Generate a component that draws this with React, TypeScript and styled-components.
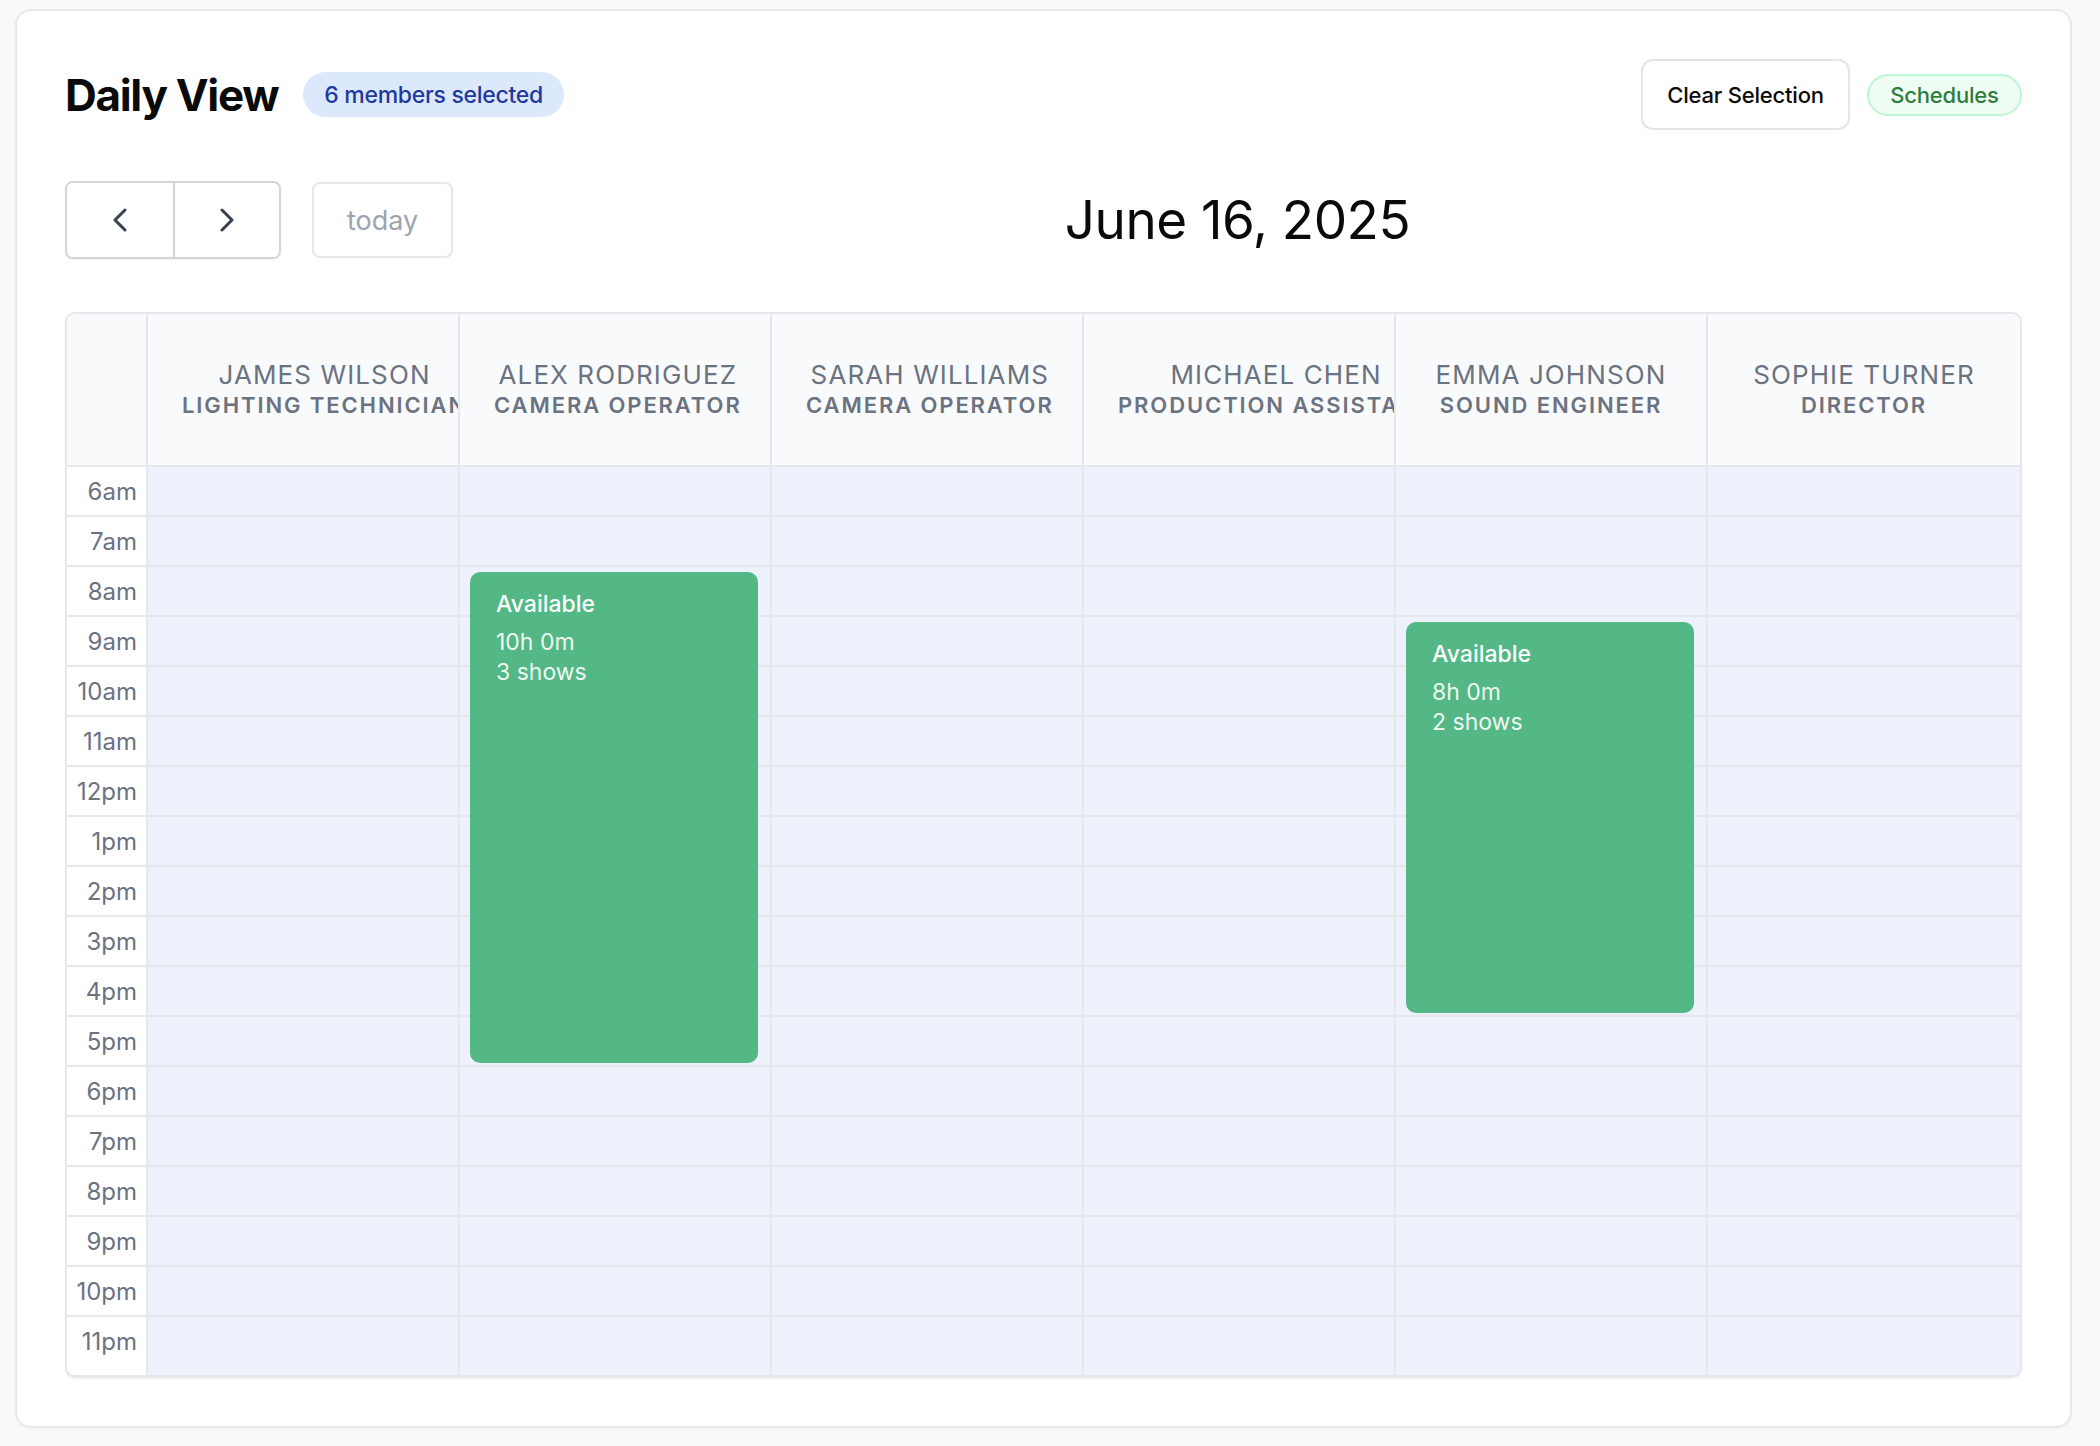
import styled, { createGlobalStyle } from "styled-components";

const GlobalStyle = createGlobalStyle`
    * { box-sizing: border-box; }
    body {
        margin: 0;
        padding: 9px 28px 18px 15px;
        background: #f9f9f9;
        font-family: Inter, "Noto Sans", sans-serif;
        color: #111827;
    }
`

const Card = styled.section`
    background: #ffffff;
    border: 2px solid #e8e8e8;
    border-radius: 16px;
    padding: 48px;
    box-shadow: 0 1px 3px rgba(0, 0, 0, 0.04);
`

const TopBar = styled.div`
    display: flex;
    align-items: center;
    justify-content: space-between;
    height: 71px;
`

const TitleGroup = styled.div`
    display: flex;
    align-items: center;
    gap: 25px;
`

const PageTitle = styled.h1`
    margin: 0;
    font-size: 44px;
    font-weight: 700;
    letter-spacing: -1.3px;
    color: #0a0a0a;
`

const CountBadge = styled.span`
    display: inline-flex;
    align-items: center;
    height: 45px;
    padding: 0 21px;
    border-radius: 999px;
    background: #dce8fb;
    color: #1e3a9f;
    font-size: 23px;
    font-weight: 500;
    letter-spacing: -0.3px;
`

const Actions = styled.div`
    display: flex;
    align-items: center;
    gap: 17px;
`

const ClearButton = styled.button`
    height: 71px;
    width: 209px;
    background: #ffffff;
    border: 2px solid #e5e5e5;
    border-radius: 12px;
    font-family: inherit;
    font-size: 22px;
    font-weight: 500;
    color: #0a0a0a;
    letter-spacing: -0.2px;
`

const SchedulePill = styled.span`
    display: inline-flex;
    align-items: center;
    justify-content: center;
    height: 42px;
    width: 155px;
    border-radius: 999px;
    background: #f0fdf4;
    border: 2px solid #bbf7d0;
    color: #2e7d3c;
    font-size: 22px;
    font-weight: 500;
    letter-spacing: -0.2px;
`

const Toolbar = styled.div`
    display: flex;
    align-items: center;
    justify-content: space-between;
    margin: 51px 0 53px;
    height: 78px;
`

const ToolbarChunk = styled.div`
    display: flex;
    align-items: center;
    gap: 31px;
    min-width: 0;
`

const NavGroup = styled.div`
    display: flex;
    height: 78px;
    border: 2px solid #d1d5db;
    border-radius: 8px;
    overflow: hidden;
    box-shadow: 0 1px 2px rgba(0, 0, 0, 0.06);
`

const NavButton = styled.button<{ $divider?: boolean }>`
    width: 106px;
    height: 100%;
    display: flex;
    align-items: center;
    justify-content: center;
    background: #ffffff;
    border: none;
    border-left: ${(p) => (p.$divider ? "2px solid #d1d5db" : "none")};
    color: #374151;
    padding: 0;
`

const TodayButton = styled.button`
    width: 141px;
    height: 76px;
    background: #ffffff;
    border: 2px solid #e5e7eb;
    border-radius: 8px;
    font-family: inherit;
    font-size: 27px;
    color: #9ca3af;
`

const DateTitle = styled.h2`
    margin: 0;
    font-size: 53px;
    font-weight: 400;
    letter-spacing: -0.5px;
    color: #0a0a0a;
`

const GridFrame = styled.div`
    border: 2px solid #e5e7eb;
    border-bottom-width: 3px;
    border-radius: 10px;
    overflow: hidden;
    box-shadow: 0 1px 2px rgba(0, 0, 0, 0.05);
`

const HeaderRow = styled.div`
    display: grid;
    grid-template-columns: 81px repeat(6, 1fr);
    background: #f9fafb;
    border-bottom: 2px solid #e5e7eb;
`

const HeaderCell = styled.div<{ $last?: boolean }>`
    height: 151px;
    padding: 45px 30px 0;
    text-align: center;
    overflow: hidden;
    border-right: ${(p) => (p.$last ? "none" : "2px solid #e5e7eb")};
`

const Cushion = styled.div`
    display: inline-block;
    padding: 0 4px;
    white-space: nowrap;
    color: #6b7280;
    text-transform: uppercase;
`

const MemberName = styled.div`
    font-size: 26px;
    line-height: 31px;
    letter-spacing: 1.1px;
`

const MemberRole = styled.div`
    font-size: 22px;
    line-height: 31px;
    font-weight: 600;
    letter-spacing: 1.9px;
`

const Body = styled.div`
    display: grid;
    grid-template-columns: 81px repeat(6, 1fr);
    grid-template-rows: repeat(17, 50px) 58px;
`

const TimeLabel = styled.div<{ $row: number; $last?: boolean }>`
    grid-column: 1;
    grid-row: ${(p) => p.$row};
    display: flex;
    align-items: ${(p) => (p.$last ? "flex-start" : "center")};
    padding-top: ${(p) => (p.$last ? "10px" : "0")};
    justify-content: flex-end;
    padding-right: 9px;
    background: #ffffff;
    border-right: 2px solid #e5e7eb;
    border-bottom: ${(p) => (p.$last ? "none" : "2px solid #e5e7eb")};
    font-size: 24px;
    color: #6b7280;
`

const Slot = styled.div<{ $row: number; $col: number; $last?: boolean }>`
    grid-column: ${(p) => p.$col};
    grid-row: ${(p) => p.$row};
    background: #edf1fb;
    border-right: ${(p) => (p.$col === 7 ? "none" : "2px solid #e5e7eb")};
    border-bottom: ${(p) => (p.$last ? "none" : "2px solid #e5e7eb")};
`

const EventBlock = styled.div<{ $col: number; $row: number; $span: number }>`
    grid-column: ${(p) => p.$col};
    grid-row: ${(p) => p.$row} / span ${(p) => p.$span};
    z-index: 1;
    margin: 5px 14px 4px 10px;
    padding: 17px 26px;
    background: #53b886;
    border-radius: 10px;
    color: #ffffff;
`

const EventTitle = styled.div`
    font-size: 23px;
    line-height: 30px;
    font-weight: 500;
    margin-bottom: 8px;
`

const EventMeta = styled.div`
    font-size: 23px;
    line-height: 30px;
    color: rgba(255, 255, 255, 0.93);
`

const members = [
    { name: "James Wilson", role: "Lighting Technician" },
    { name: "Alex Rodriguez", role: "Camera Operator" },
    { name: "Sarah Williams", role: "Camera Operator" },
    { name: "Michael Chen", role: "Production Assistant" },
    { name: "Emma Johnson", role: "Sound Engineer" },
    { name: "Sophie Turner", role: "Director" },
]

const hours = [
    "6am", "7am", "8am", "9am", "10am", "11am", "12pm", "1pm", "2pm",
    "3pm", "4pm", "5pm", "6pm", "7pm", "8pm", "9pm", "10pm", "11pm",
]

// member index, start hour index (from 6am), length in hours
const availability = [
    { member: 1, start: 2, span: 10, duration: "10h 0m", shows: "3 shows" },
    { member: 4, start: 3, span: 8, duration: "8h 0m", shows: "2 shows" },
]

const Chevron = ({ dir }: { dir: "left" | "right" }) => (
    <svg width="14" height="24" viewBox="0 0 14 24" fill="none">
        <polyline
            points={dir === "left" ? "12,2 2,12 12,22" : "2,2 12,12 2,22"}
            stroke="currentColor"
            strokeWidth="3"
            strokeLinecap="round"
            strokeLinejoin="round"
        />
    </svg>
)

const App = () => {
    const lastRow = hours.length - 1

    return (
        <>
            <GlobalStyle />
            <Card>
                <TopBar>
                    <TitleGroup>
                        <PageTitle>Daily View</PageTitle>
                        <CountBadge>6 members selected</CountBadge>
                    </TitleGroup>
                    <Actions>
                        <ClearButton>Clear Selection</ClearButton>
                        <SchedulePill>Schedules</SchedulePill>
                    </Actions>
                </TopBar>

                <Toolbar>
                    <ToolbarChunk>
                        <NavGroup>
                            <NavButton aria-label="prev"><Chevron dir="left" /></NavButton>
                            <NavButton $divider aria-label="next"><Chevron dir="right" /></NavButton>
                        </NavGroup>
                        <TodayButton>today</TodayButton>
                    </ToolbarChunk>
                    <ToolbarChunk>
                        <DateTitle>June 16, 2025</DateTitle>
                    </ToolbarChunk>
                    <ToolbarChunk />
                </Toolbar>

                <GridFrame>
                    <HeaderRow>
                        <HeaderCell />
                        {members.map((m, i) => (
                            <HeaderCell key={m.name} $last={i === members.length - 1}>
                                <Cushion>
                                    <MemberName>{m.name}</MemberName>
                                    <MemberRole>{m.role}</MemberRole>
                                </Cushion>
                            </HeaderCell>
                        ))}
                    </HeaderRow>
                    <Body>
                        {hours.map((h, r) => (
                            <TimeLabel key={h} $row={r + 1} $last={r === lastRow}>{h}</TimeLabel>
                        ))}
                        {hours.map((h, r) =>
                            members.map((m, c) => (
                                <Slot key={h + m.name} $row={r + 1} $col={c + 2} $last={r === lastRow} />
                            ))
                        )}
                        {availability.map((a) => (
                            <EventBlock key={a.member} $col={a.member + 2} $row={a.start + 1} $span={a.span}>
                                <EventTitle>Available</EventTitle>
                                <EventMeta>{a.duration}</EventMeta>
                                <EventMeta>{a.shows}</EventMeta>
                            </EventBlock>
                        ))}
                    </Body>
                </GridFrame>
            </Card>
        </>
    )
}

export default App;
